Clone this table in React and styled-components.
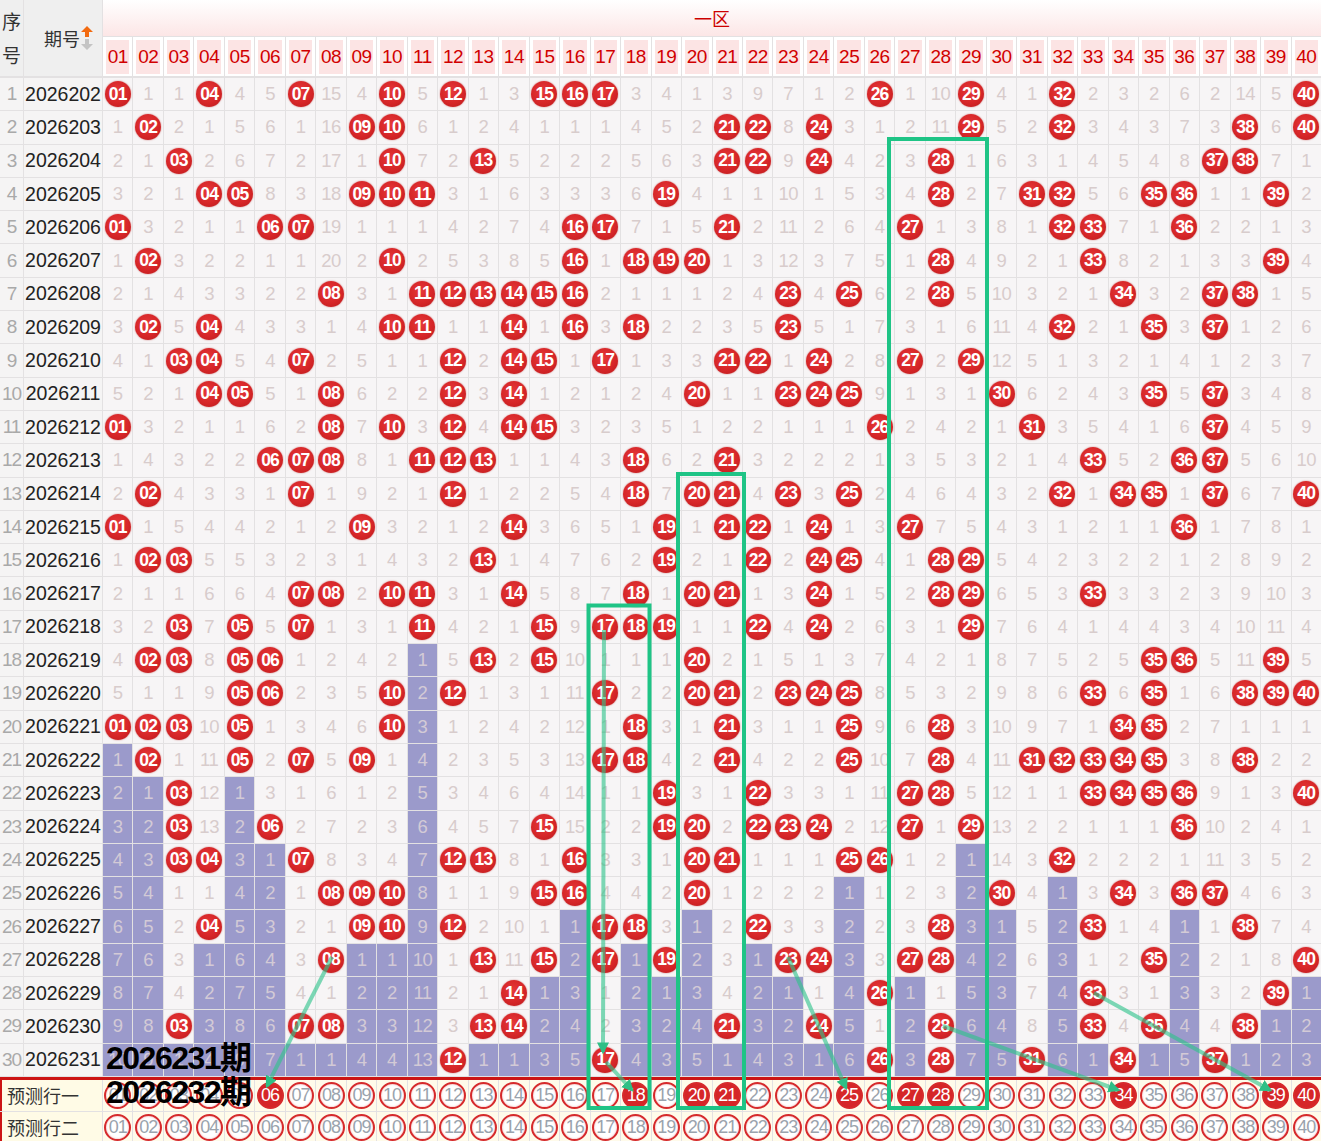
import React from "react";
import styled, { createGlobalStyle } from "styled-components";

const GlobalStyle = createGlobalStyle`
  html, body {
    margin: 0;
    padding: 0;
    background: #fff;
    overflow: hidden;
  }
  body {
    font-family: "Liberation Sans", "Noto Sans CJK SC", Arial, sans-serif;
  }
`;

const FIRST = 23;
const SECOND = 78;
const TEMPLATE = `${FIRST}px ${SECOND}px repeat(40, minmax(0, 1fr))`;
const ROW_H = 32.3;

// draws of 一区, one list per period
const ISSUES = Array.from({ length: 30 }, (_, i) => 2026202 + i);
const HITS = [
  [1, 4, 7, 10, 12, 15, 16, 17, 26, 29, 32, 40],
  [2, 9, 10, 21, 22, 24, 29, 32, 38, 40],
  [3, 10, 13, 21, 22, 24, 28, 37, 38],
  [4, 5, 9, 10, 11, 19, 28, 31, 32, 35, 36, 39],
  [1, 6, 7, 16, 17, 21, 27, 32, 33, 36],
  [2, 10, 16, 18, 19, 20, 28, 33, 39],
  [8, 11, 12, 13, 14, 15, 16, 23, 25, 28, 34, 37, 38],
  [2, 4, 10, 11, 14, 16, 18, 23, 32, 35, 37],
  [3, 4, 7, 12, 14, 15, 17, 21, 22, 24, 27, 29],
  [4, 5, 8, 12, 14, 20, 23, 24, 25, 30, 35, 37],
  [1, 8, 10, 12, 14, 15, 26, 31, 37],
  [6, 7, 8, 11, 12, 13, 18, 21, 33, 36, 37],
  [2, 7, 12, 18, 20, 21, 23, 25, 32, 34, 35, 37, 40],
  [1, 9, 14, 19, 21, 22, 24, 27, 36],
  [2, 3, 13, 19, 22, 24, 25, 28, 29],
  [7, 8, 10, 11, 14, 18, 20, 21, 24, 28, 29, 33],
  [3, 5, 7, 11, 15, 17, 18, 19, 22, 24, 29],
  [2, 3, 5, 6, 13, 15, 20, 35, 36, 39],
  [5, 6, 10, 12, 17, 20, 21, 23, 24, 25, 33, 35, 38, 39, 40],
  [1, 2, 3, 5, 10, 18, 21, 25, 28, 34, 35],
  [2, 5, 7, 9, 17, 18, 21, 25, 28, 31, 32, 33, 34, 35, 38],
  [3, 19, 22, 27, 28, 33, 34, 35, 36, 40],
  [3, 6, 15, 19, 20, 22, 23, 24, 27, 29, 36],
  [3, 4, 7, 12, 13, 16, 20, 21, 25, 26, 32],
  [8, 9, 10, 15, 16, 20, 30, 34, 36, 37],
  [4, 9, 10, 12, 17, 18, 22, 28, 33, 38],
  [8, 13, 15, 17, 19, 23, 24, 27, 28, 35, 40],
  [14, 26, 33, 39],
  [3, 7, 8, 13, 14, 21, 24, 28, 33, 35, 38],
  [12, 17, 26, 28, 31, 34, 37],
];
// misses shown on the first row (0 = drawn)
const FIRST_MISS = [
  0, 1, 1, 0, 4, 5, 0, 15, 4, 0, 5, 0, 1, 3, 0, 0, 0, 3, 4, 1,
  3, 9, 7, 1, 2, 0, 1, 10, 0, 4, 1, 0, 2, 3, 2, 6, 2, 14, 5, 0,
];
const PREDICT_ONE = [6, 18, 20, 21, 25, 27, 28, 34, 39, 40];

const pad = (n) => String(n).padStart(2, "0");
const NUMS = Array.from({ length: 40 }, (_, i) => i + 1);

const buildRows = () => {
  let prev = FIRST_MISS.map((v) => v - 1);
  const rows = HITS.map((hits) => {
    const miss = NUMS.map((n, i) => (hits.includes(n) ? 0 : prev[i] + 1));
    prev = miss;
    return miss;
  });
  const lastHit = NUMS.map((n) => {
    let last = -1;
    HITS.forEach((hits, r) => {
      if (hits.includes(n)) last = r;
    });
    return last;
  });
  return rows.map((miss, r) =>
    miss.map((m, i) => ({ n: i + 1, miss: m, cold: r > lastHit[i] }))
  );
};

const ROWS = buildRows();

const Page = styled.div`
  position: relative;
  width: 1322px;
  height: 1141px;
  overflow: hidden;
`;

const Table = styled.div`
  width: 1321px;
  display: flex;
  flex-direction: column;
  gap: 1px;
  background: #e3e1e2;
`;

const Head = styled.div`
  display: grid;
  grid-template-columns: ${TEMPLATE};
  grid-template-rows: 36px 39px;
  gap: 1px;
  border-bottom: 1px solid #e3e1e2;
`;

const IdxHead = styled.div`
  grid-row: 1 / 3;
  background: #efefef;
  color: #333;
  font-size: 19px;
  line-height: 34px;
  padding-left: 2px;
  display: flex;
  align-items: center;
  font-family: "Noto Sans CJK SC", sans-serif;
`;

const IssueHead = styled.div`
  grid-row: 1 / 3;
  background: #efefef;
  color: #333;
  font-size: 18px;
  display: flex;
  align-items: center;
  justify-content: flex-end;
  padding-right: 8px;
  font-family: "Noto Sans CJK SC", sans-serif;
`;

const ZoneHead = styled.div`
  grid-column: 3 / 43;
  background: linear-gradient(#ffffff, #fce6e6);
  color: #cc0000;
  font-size: 18px;
  display: flex;
  align-items: center;
  justify-content: center;
  font-family: "Noto Sans CJK SC", sans-serif;
`;

const NumHead = styled.div`
  background: #fce4e4;
  border: 3px solid #fff;
  border-bottom-width: 2px;
  color: #d10000;
  font-size: 19px;
  display: flex;
  align-items: center;
  justify-content: center;
  letter-spacing: -0.5px;
`;

const Row = styled.div`
  display: grid;
  grid-template-columns: ${TEMPLATE};
  height: ${ROW_H}px;
  gap: 1px;
`;

const IdxCell = styled.div`
  background: #f5f4f4;
  color: #a9a9a9;
  font-size: 19px;
  letter-spacing: -1px;
  display: flex;
  align-items: center;
  justify-content: center;
`;

const IssueCell = styled.div`
  background: #f5f4f4;
  color: #222;
  font-size: 19.5px;
  display: flex;
  align-items: center;
  justify-content: center;
`;

const NumCell = styled.div`
  background: ${(p) => (p.$cold ? "#9b9acb" : "#f7f5f6")};
  color: ${(p) => (p.$cold ? "#d3cad6" : "#d8cccc")};
  font-size: 18.5px;
  letter-spacing: -0.5px;
  display: flex;
  align-items: center;
  justify-content: center;
`;

const Ball = styled.span`
  width: 26px;
  height: 26px;
  border-radius: 50%;
  background: radial-gradient(circle at 45% 40%, #e6383a 0%, #d62628 55%, #b8191c 100%);
  box-shadow: 0 0 1.5px rgba(170, 20, 20, 0.7);
  color: #fff;
  font-weight: bold;
  font-size: 17.5px;
  letter-spacing: -0.8px;
  display: flex;
  align-items: center;
  justify-content: center;
`;

const Predict = styled.div`
  display: flex;
  flex-direction: column;
  gap: 1px;
  border-top: 3px solid #cc1414;
`;

const PredRow = styled.div`
  display: grid;
  grid-template-columns: ${TEMPLATE};
  height: 31px;
  gap: 1px;
`;

const PredLabel = styled.div`
  grid-column: 1 / 3;
  background: #fffbe6;
  border-left: 2px solid #cc1414;
  color: #333;
  font-size: 18px;
  padding-left: 5px;
  display: flex;
  align-items: center;
  font-family: "Noto Sans CJK SC", sans-serif;
`;

const PredCell = styled.div`
  background: #fffbea;
  display: flex;
  align-items: center;
  justify-content: center;
`;

const Ring = styled.span`
  width: 23px;
  height: 23px;
  border-radius: 50%;
  border: 2px solid #d62a2c;
  background: ${(p) => (p.$on ? "#d62628" : "#fff")};
  box-shadow: inset 0 0 2px rgba(214, 42, 44, 0.5);
  color: ${(p) => (p.$on ? "#fff" : "#9aa3ad")};
  font-size: 18px;
  letter-spacing: -1px;
  display: flex;
  align-items: center;
  justify-content: center;
`;

const Overlay = styled.svg`
  position: absolute;
  left: 0;
  top: 0;
  pointer-events: none;
`;

const Stamp = styled.div`
  position: absolute;
  left: 106px;
  top: ${(p) => p.$top}px;
  color: #000;
  font-size: 32px;
  font-weight: bold;
  letter-spacing: -1.5px;
  line-height: 34px;
  font-family: "Liberation Sans", "Noto Sans CJK SC", sans-serif;
`;

const SortIcon = () => (
  <svg width="14" height="26" viewBox="0 0 14 26">
    <path d="M7 1 L13 7 L9 7 L9 12 L5 12 L5 7 L1 7 Z" fill="#f26a10" />
    <path d="M7 25 L13 19 L9 19 L9 14 L5 14 L5 19 L1 19 Z" fill="#c4c4c4" />
  </svg>
);

const BOXES = [
  { x1: 889, x2: 987, y1: 139, y2: 1108 },
  { x1: 678, x2: 744, y1: 474, y2: 1108 },
  { x1: 588.5, x2: 649.5, y1: 605.5, y2: 1108 },
];

const LINES = [
  [332, 957, 267, 1086],
  [604, 630, 603, 1052],
  [606, 1062, 632, 1090],
  [788, 957, 846, 1088],
  [943, 1026, 1118, 1090],
  [1094, 993, 1270, 1090],
];

const Marks = () => (
  <Overlay width="1322" height="1141">
    <defs>
      <marker id="tip" viewBox="0 0 10 10" refX="8" refY="5" markerWidth="3" markerHeight="3" orient="auto">
        <path d="M0 0 L10 5 L0 10 Z" fill="#2fbf86" />
      </marker>
    </defs>
    {LINES.map(([x1, y1, x2, y2], i) => (
      <line
        key={i}
        x1={x1}
        y1={y1}
        x2={x2}
        y2={y2}
        stroke="rgba(46, 196, 138, 0.62)"
        strokeWidth="4"
        markerEnd="url(#tip)"
      />
    ))}
    {BOXES.map((b, i) => (
      <rect
        key={i}
        x={b.x1}
        y={b.y1}
        width={b.x2 - b.x1}
        height={b.y2 - b.y1}
        fill="none"
        stroke="#1fc486"
        strokeWidth="4"
      />
    ))}
  </Overlay>
);

export default function App() {
  return (
    <Page>
      <GlobalStyle />
      <Table>
        <Head>
          <IdxHead>序号</IdxHead>
          <IssueHead>
            期号
            <SortIcon />
          </IssueHead>
          <ZoneHead>一区</ZoneHead>
          {NUMS.map((n) => (
            <NumHead key={n}>{pad(n)}</NumHead>
          ))}
        </Head>
        {ROWS.map((cells, r) => (
          <Row key={ISSUES[r]}>
            <IdxCell>{r + 1}</IdxCell>
            <IssueCell>{ISSUES[r]}</IssueCell>
            {cells.map((c) => (
              <NumCell key={c.n} $cold={c.cold}>
                {c.miss === 0 ? <Ball>{pad(c.n)}</Ball> : c.miss}
              </NumCell>
            ))}
          </Row>
        ))}
        <Predict>
          <PredRow>
            <PredLabel>预测行一</PredLabel>
            {NUMS.map((n) => (
              <PredCell key={n}>
                <Ring $on={PREDICT_ONE.includes(n)}>{pad(n)}</Ring>
              </PredCell>
            ))}
          </PredRow>
          <PredRow>
            <PredLabel>预测行二</PredLabel>
            {NUMS.map((n) => (
              <PredCell key={n}>
                <Ring>{pad(n)}</Ring>
              </PredCell>
            ))}
          </PredRow>
        </Predict>
      </Table>
      <Marks />
      <Stamp $top={1041}>2026231期</Stamp>
      <Stamp $top={1075}>2026232期</Stamp>
    </Page>
  );
}
